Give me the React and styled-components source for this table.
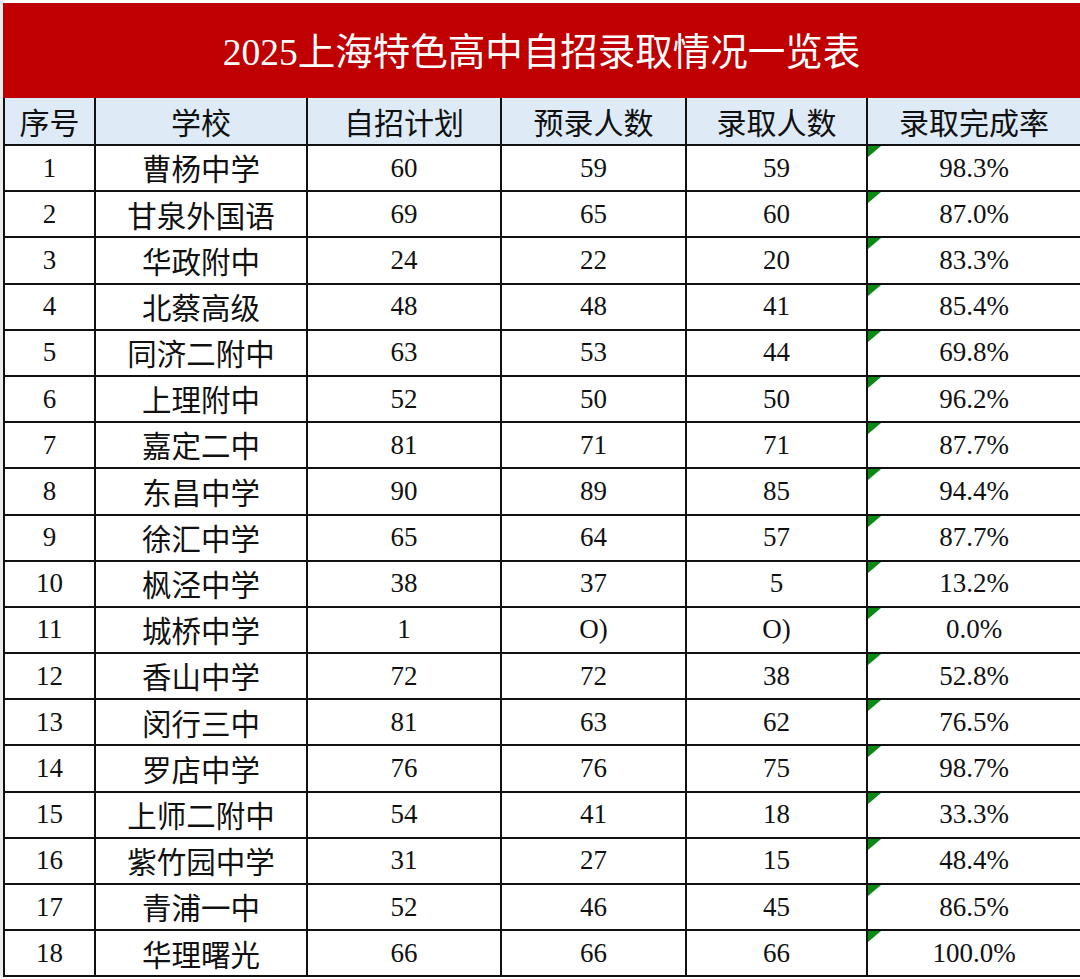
import React from "react";
import styled, { createGlobalStyle } from "styled-components";

const GlobalStyle = createGlobalStyle`
  html, body {
    margin: 0;
    padding: 0;
    background: #ffffff;
  }
  body {
    font-family: "Liberation Serif", "Noto Sans CJK SC", serif;
  }
`;

const Page = styled.div`
  width: 1080px;
  padding: 3px 0 0 3px;
  box-sizing: border-box;
  background: linear-gradient(to right, #ececec 0, #ececec 3px, #ffffff 3px);
`;

const TitleBar = styled.div`
  height: 95px;
  background: #c00000;
  color: #ffffff;
  display: flex;
  align-items: center;
  justify-content: center;
  font-family: "Liberation Serif", "Noto Sans CJK SC", serif;
  font-size: 37.5px;
  padding-bottom: 4px;
  box-sizing: border-box;
`;

const Table = styled.table`
  width: 1077px;
  border-collapse: collapse;
  table-layout: fixed;
  border-left: 1px solid #bdbdbd;
`;

const HeadRow = styled.tr`
  height: 47px;
  background: #deebf7;
`;

const Row = styled.tr`
  height: 46.2px;
`;

const HeadCell = styled.th`
  border: 2px solid #111111;
  border-top: none;
  padding: 0;
  font-family: "Noto Sans CJK SC", sans-serif;
  font-weight: 400;
  font-size: 30px;
  color: #111111;
  text-align: center;
  vertical-align: middle;
  line-height: 1;
`;

const Cell = styled.td`
  position: relative;
  border: 2px solid #111111;
  padding: 0;
  text-align: center;
  vertical-align: middle;
  color: #111111;
  line-height: 1;
  font-family: ${({ $cjk }) =>
    $cjk ? `"Noto Sans CJK SC", sans-serif` : `"Liberation Serif", serif`};
  font-size: ${({ $cjk }) => ($cjk ? "29.5px" : "27px")};

  ${({ $flag }) =>
    $flag &&
    `
    &::before {
      content: "";
      position: absolute;
      top: 0;
      left: 0;
      width: 0;
      height: 0;
      border-top: 11px solid #0a8a14;
      border-right: 13px solid transparent;
    }
  `}
`;

const columns = ["序号", "学校", "自招计划", "预录人数", "录取人数", "录取完成率"];
const widths = [91, 212, 194, 185, 181, 214];

const rows = [
  ["曹杨中学", "60", "59", "59", "98.3%"],
  ["甘泉外国语", "69", "65", "60", "87.0%"],
  ["华政附中", "24", "22", "20", "83.3%"],
  ["北蔡高级", "48", "48", "41", "85.4%"],
  ["同济二附中", "63", "53", "44", "69.8%"],
  ["上理附中", "52", "50", "50", "96.2%"],
  ["嘉定二中", "81", "71", "71", "87.7%"],
  ["东昌中学", "90", "89", "85", "94.4%"],
  ["徐汇中学", "65", "64", "57", "87.7%"],
  ["枫泾中学", "38", "37", "5", "13.2%"],
  ["城桥中学", "1", "O)", "O)", "0.0%"],
  ["香山中学", "72", "72", "38", "52.8%"],
  ["闵行三中", "81", "63", "62", "76.5%"],
  ["罗店中学", "76", "76", "75", "98.7%"],
  ["上师二附中", "54", "41", "18", "33.3%"],
  ["紫竹园中学", "31", "27", "15", "48.4%"],
  ["青浦一中", "52", "46", "45", "86.5%"],
  ["华理曙光", "66", "66", "66", "100.0%"],
];

export default function App() {
  return (
    <>
      <GlobalStyle />
      <Page>
        <TitleBar>2025上海特色高中自招录取情况一览表</TitleBar>
        <Table>
          <colgroup>
            {widths.map((w, i) => (
              <col key={i} style={{ width: w }} />
            ))}
          </colgroup>
          <thead>
            <HeadRow>
              {columns.map((c) => (
                <HeadCell key={c}>{c}</HeadCell>
              ))}
            </HeadRow>
          </thead>
          <tbody>
            {rows.map((r, i) => (
              <Row key={i}>
                <Cell>{i + 1}</Cell>
                <Cell $cjk>{r[0]}</Cell>
                <Cell>{r[1]}</Cell>
                <Cell>{r[2]}</Cell>
                <Cell>{r[3]}</Cell>
                <Cell $flag>{r[4]}</Cell>
              </Row>
            ))}
          </tbody>
        </Table>
      </Page>
    </>
  );
}
